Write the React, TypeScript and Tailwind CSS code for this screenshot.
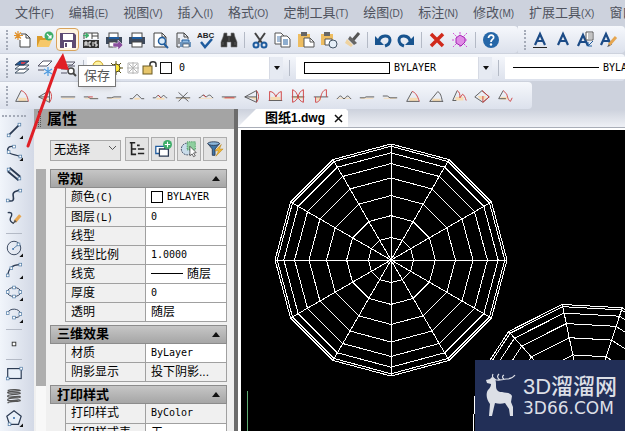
import type { ReactNode } from "react";
import clsx from "clsx";

const NAVY = "#2b3a52";
const BLUE = "#1f5c9e";

const menus = [
	["文件", "(F)"],
	["编辑", "(E)"],
	["视图", "(V)"],
	["插入", "(I)"],
	["格式", "(O)"],
	["定制工具", "(T)"],
	["绘图", "(D)"],
	["标注", "(N)"],
	["修改", "(M)"],
	["扩展工具", "(X)"],
	["窗口", ""],
];

type Tool = { label: string; art: ReactNode } | "sep";

const standardTools: Tool[] = [
	{
		label: "新建",
		art: (
			<>
				<path d="M9 4h5l4 4v9H8v-7" fill="#fff" stroke="#444" />
				<path d="M14 4v4h4" fill="none" stroke="#444" />
				<path d="M6 1v9M2 5.500h9M3 2.500l6 6M9 2.500l-6 6" stroke="#e0912c" strokeWidth="1.200" />
			</>
		),
	},
	{
		label: "打开",
		art: (
			<>
				<path d="M2 6h5l1 2h6v9H2z" fill="#d99a2b" />
				<path d="M2 17l3-7h12l-3 7z" fill="#f6c869" />
				<circle cx="14" cy="6" r="4.500" fill="#3fae6a" />
				<path d="M12 4l4 4M16 5v3h-3" stroke="#fff" fill="none" strokeWidth="1.200" />
			</>
		),
	},
	{
		label: "保存",
		art: (
			<>
				<path d="M2 3h14l2 2v13H2z" fill="#5d4a72" />
				<rect x="5" y="4" width="10" height="6" fill="#fff" />
				<rect x="6" y="12" width="8" height="6" fill="#fff" />
				<rect x="7" y="13" width="2" height="4" fill="#5d4a72" />
			</>
		),
	},
	{
		label: "ACIS",
		art: (
			<>
				<path d="M3 9V3h14v6" fill="#fff" stroke="#444" />
				<path d="M11 3v6M11 6h6" stroke="#444" />
				<path d="M2 5.500h5M5 3l3 2.500L5 8z" fill="#3fae6a" stroke="#3fae6a" />
				<rect x="2" y="10" width="16" height="8" fill="#333" />
				<path d="M4 16v-4h2v4M4 14h2M10 12H8v4h2M12 12v4M16 12h-2v2h2v2h-2" stroke="#fff" fill="none" />
			</>
		),
	},
	{
		label: "输出",
		art: (
			<>
				<rect x="5" y="3" width="9" height="5" fill="#fff" stroke="#444" />
				<path d="M2 7h16v7H2z" fill="#3e4a5c" />
				<rect x="5" y="7" width="10" height="2" fill={BLUE} />
				<rect x="5" y="12" width="7" height="5" fill="#fff" stroke="#444" />
				<path d="M9 13h5v-3l5 5-5 5v-3H9z" fill="#8a4f9e" stroke="#fff" strokeWidth=".5" />
			</>
		),
	},
	{
		label: "打印",
		art: (
			<>
				<rect x="5" y="3" width="10" height="5" fill="#fff" stroke="#444" />
				<path d="M2 7h16v7H2z" fill="#3e4a5c" />
				<rect x="5" y="7" width="10" height="2" fill={BLUE} />
				<rect x="5" y="12" width="10" height="5" fill="#fff" stroke="#444" />
			</>
		),
	},
	{
		label: "打印预览",
		art: (
			<>
				<path d="M4 3h8l4 4v10H4z" fill="#fff" stroke="#444" />
				<path d="M12 3v4h4" fill="none" stroke="#444" />
				<circle cx="12" cy="11" r="3.500" fill="#dcebf8" stroke={BLUE} strokeWidth="1.500" />
				<path d="M14 14l4 4" stroke={BLUE} strokeWidth="2" />
			</>
		),
	},
	{
		label: "页面设置",
		art: (
			<>
				<path d="M4 17V3h7l4 4v2M4 17h3" fill="none" stroke="#444" />
				<path d="M11 3v4h4M6 8v6" fill="none" stroke="#444" />
				<path d="M9 10h7v3H9z" fill="#8db8e0" stroke={BLUE} />
				<path d="M7 12h11v5H7z" fill="#6c94bd" />
				<rect x="10" y="14" width="6" height="3" fill="#fff" stroke="#456" strokeWidth=".7" />
			</>
		),
	},
	{
		label: "拼写检查",
		art: (
			<>
				<text x="1" y="8" fontSize="8" fontWeight="700" fontFamily="Liberation Sans, sans-serif" fill="#222">
					ABC
				</text>
				<path d="M5 12l4 5 7-8" fill="none" stroke={BLUE} strokeWidth="2.500" />
			</>
		),
	},
	{
		label: "查找",
		art: (
			<path
				d="M5 3h3v3h4V3h3l1 4 2 5v5h-6v-5H8v5H2v-5l2-5zM4 12v3M16 12v3M10 7v4"
				fill="#333"
				stroke="#777"
				strokeWidth=".6"
			/>
		),
	},
	"sep",
	{
		label: "剪切",
		art: (
			<>
				<path d="M5 3l7 10M15 3L8 13" stroke="#444" strokeWidth="2" />
				<circle cx="6" cy="15" r="2.500" fill="none" stroke={BLUE} strokeWidth="2" />
				<circle cx="14" cy="15" r="2.500" fill="none" stroke={BLUE} strokeWidth="2" />
			</>
		),
	},
	{
		label: "复制",
		art: (
			<>
				<path d="M2 3h6l3 3v8H2z" fill="#fff" stroke="#555" />
				<path d="M4 7h4M4 9h4M4 11h4" stroke={BLUE} strokeWidth=".8" />
				<path d="M8 6h6l3 3v8H8z" fill="#fff" stroke="#555" />
				<path d="M10 10h5M10 12h5M10 14h5" stroke={BLUE} />
			</>
		),
	},
	{
		label: "粘贴",
		art: (
			<>
				<path d="M2 4h12v13H2z" fill="#eebd60" />
				<path d="M5 2h6v4H5z" fill="#666" />
				<path d="M8 8h6l4 4v5H8z" fill="#fff" stroke="#555" />
				<path d="M14 8v4h4" fill="none" stroke="#555" />
			</>
		),
	},
	{
		label: "选择性粘贴",
		art: (
			<>
				<path d="M2 4h12v11H2z" fill="#eebd60" />
				<path d="M5 2h6v4H5z" fill="#666" />
				<path d="M6 9h7v6H6z" fill="#fff" stroke="#555" />
				<circle cx="14" cy="14" r="4" fill="#e5eef8" stroke="#456" />
			</>
		),
	},
	{
		label: "格式刷",
		art: (
			<>
				<path d="M17 3l-6 7" stroke="#555" strokeWidth="3" />
				<path d="M8 6l7 7-3 2-6-6z" fill="#666" />
				<path d="M5 9l6 6-2 2-6-4z" fill="#efd3a0" />
			</>
		),
	},
	"sep",
	{
		label: "放弃",
		art: (
			<>
				<path d="M6 11c1-6 11-7 11-1 0 3-2 5-5 6" fill="none" stroke="#18548f" strokeWidth="3" />
				<path d="M2 6v9h9z" fill="#18548f" />
			</>
		),
	},
	{
		label: "重做",
		art: (
			<>
				<path d="M14 11C13 5 3 4 3 10c0 3 2 5 5 6" fill="none" stroke="#18548f" strokeWidth="3" />
				<path d="M18 6v9H9z" fill="#18548f" />
			</>
		),
	},
	"sep",
	{ label: "删除", art: <path d="M4 4l12 12M16 4L4 16" stroke="#d02a1c" strokeWidth="3.500" /> },
	{
		label: "清理",
		art: (
			<>
				<path d="M3 3l14 14M17 3L3 17M10 2v3M10 15v3M2 10h3M15 10h3" stroke="#d44fd8" strokeDasharray="2 1" />
				<path d="M10 5l5 3v4l-4 4-5-3V8z" fill="#e08be6" stroke="#a424b4" />
			</>
		),
	},
	"sep",
	{
		label: "帮助",
		art: (
			<>
				<circle cx="10" cy="10" r="8" fill="#2667a8" />
				<path d="M7.500 8c0-4 6-3.500 5 0-.5 1.500-2.500 1.500-2.500 4" fill="none" stroke="#fff" strokeWidth="1.800" />
				<circle cx="10" cy="14.500" r="1.200" fill="#fff" />
			</>
		),
	},
];

const letterA = <path d="M5 15l5-11 5 11M7 11h6" fill="none" stroke="#1c4b86" strokeWidth="2.200" />;

const textTools: Tool[] = [
	{
		label: "单行文字",
		art: (
			<>
				{letterA}
				<path d="M3 17.500h14" stroke="#222" />
			</>
		),
	},
	{ label: "多行文字", art: letterA },
	{
		label: "编辑文字",
		art: (
			<>
				<g transform="translate(-3 1)">{letterA}</g>
				<path d="M10 2h7v8h-7z" fill="#fff" stroke="#555" />
				<path d="M12 4h4M12 6h4M12 8h4" stroke="#555" strokeWidth=".7" />
				<path d="M17 11l-5 5M12 12v4h4" fill="none" stroke={BLUE} />
			</>
		),
	},
	{
		label: "文字样式",
		art: (
			<>
				<g transform="translate(-3 0)">{letterA}</g>
				<path d="M17 7l-7 8" stroke="#e6a650" strokeWidth="3" />
				<path d="M10 14l-2 3 3-1z" fill="#555" />
			</>
		),
	},
];

const layerTools: Tool[] = [
	{
		label: "图层",
		art: (
			<>
				<path d="M3 15h9l5-4H8z" fill="#fff" stroke="#456" />
				<path d="M3 11h9l5-4H8z" fill="#fff" stroke="#456" />
				<path d="M3 7h9l5-4H8z" fill={BLUE} stroke={NAVY} />
				<path d="M9 4h5l-2 2H9z" fill="#c94050" />
			</>
		),
	},
	{
		label: "图层状态",
		art: (
			<>
				<path d="M3 8h9l5-5H8z" fill="#fff" stroke="#556" />
				<path d="M3 12h6" stroke="#556" />
				<path d="M13 9v9M9 11l8 5M17 11l-8 5" stroke="#4d9be0" strokeWidth="1.200" />
			</>
		),
	},
	{
		label: "图层浏览",
		art: (
			<>
				<path d="M5 4h12l-3 3H3M3 11h6l2-3h6M3 15h6" fill="none" stroke="#556" />
				<circle cx="13" cy="13" r="3" fill="#fff" stroke="#444" strokeWidth="1.500" />
				<path d="M15 15l3 3" stroke="#444" strokeWidth="2" />
			</>
		),
	},
];

// dark construction lines with the red result curve on top
function sketch(dark: string, red: string, fill = ""): ReactNode {
	return (
		<>
			<path d={fill} fill="#f6dcb4" />
			<path d={dark} fill="none" stroke="#555" />
			<path d={red} fill="none" stroke="#cf3b3b" />
		</>
	);
}

const BASE = "M3 12h14v1H3z";

const surfaceTools: Tool[] = [
	{ label: "曲面 1", art: sketch("M3 16L9 4M3 16h14", "M9 4c4 1 7 5 8 12", "M6 12h9v4H6z") },
	{ label: "曲面 2", art: sketch("M3 11l12-7v13zM3 11h12", "M15 4c3 4 3 9 0 13", "M6 11l9 3v3z") },
	{ label: "曲面 3", art: sketch("M2 11h16", "", BASE) },
	{ label: "曲面 4", art: sketch("M2 11h5l2 2h9", "M7 11h5", BASE) },
	{ label: "曲面 5", art: sketch("M2 12h5l3-1h8", "", BASE) },
	{ label: "曲面 6", art: sketch("M2 13h3l5-5 5 5h3", "", "M7 12h6v2H7z") },
	{ label: "曲面 7", art: sketch("M2 12h3l3-3 3 3 3-3 3 3h1", "M8 9l3 3", "M6 12h9v2H6z") },
	{ label: "曲面 8", art: sketch("M2 12h16M5 6l11 10M15 6L5 16", "", BASE) },
	{ label: "曲面 9", art: sketch("M2 12c3 0 3-3 5-3s2 2 3 2 2-2 4-2 2 3 4 3", "M7 9l3 2", BASE) },
	{ label: "曲面 10", art: sketch("M2 11h16", "M5 12h11", BASE) },
	{ label: "曲面 11", art: sketch("M2 11l13-7v13zM2 11h13", "M15 4c3 4 3 9 0 13", "M6 11h9v4z") },
	{ label: "曲面 12", art: sketch("M3 15h15", "M4 15V5c4 0 6 3 7 6 1-3 3-5 6-6v10", "M5 11h11v4H5z") },
	{ label: "曲面 13", art: sketch("M3 11h14", "M4 3c3 1 5 4 6 8 1-4 3-7 6-8v14c-3-1-5-3-6-6-1 3-3 5-6 6z", "M5 10h10v3H5z") },
	{ label: "曲面 14", art: sketch("M2 11h16", "M4 11v6c4 0 5-3 6-7s3-7 6-7v8", "M5 11h5v4H5z") },
	{ label: "曲面 15", art: sketch("M2 13c2 0 2-3 4-3s2 3 4 3 2-3 4-3 2 3 4 3", "", BASE) },
	{ label: "曲面 16", art: sketch("M2 12h5l2-1h9", "", BASE) },
	{ label: "曲面 17", art: sketch("M2 10h5l3 2h8", "", BASE) },
	{ label: "曲面 18", art: sketch("M3 16L9 5M3 16h14", "M9 5c4 1 6 5 8 11", "M6 12h9v4H6z") },
	{ label: "曲面 19", art: sketch("M3 16l9-11M3 16h15M12 5c3 2 4 5 5 11", "", "M6 13h9v3H6z") },
	{ label: "曲面 20", art: sketch("M3 15L8 4M3 15h4", "M8 4c3 2 3 4 3 8l3-4c2 1 3 4 4 7", "M6 11h9v4H6z") },
	{ label: "曲面 21", art: sketch("M2 11l8-7 8 7-7 6z", "M10 4l8 7-7 6v-7", "M5 10h9v4H8z") },
	{ label: "曲面 22", art: sketch("M3 13L8 4M3 13h8", "M8 4l4 4c1 5 3 8 4 8l2-4", "M5 11h8v3H5z") },
];

const nodes = (points: number[][]) =>
	points.map(([x, y]) => (
		<rect key={`${x}-${y}`} x={x - 1.5} y={y - 1.5} width="3" height="3" fill="#fff" stroke="#4f7ba5" strokeWidth=".8" />
	));
const flyout = <path d="M20 16v4h-4z" fill="#111" />;

const drawTools: Tool[] = [
	{ label: "直线", art: <><path d="M4 16L16 4" stroke={NAVY} strokeWidth="2" />{nodes([[4, 16], [16, 4]])}{flyout}</> },
	{ label: "多段线", art: <><path d="M9 4C3 3 1 8 5 11c3 2 8 2 12 4" fill="none" stroke={NAVY} strokeWidth="1.400" />{nodes([[10, 4], [4, 10], [17, 15]])}{flyout}</> },
	{ label: "双线", art: <><path d="M3 7l12 10M5 3l12 10" stroke={NAVY} strokeWidth="2" />{nodes([[4, 5], [16, 15]])}</> },
	{ label: "样条", art: <><path d="M3 15c7 2 7-1 6-6s6-4 7-6" fill="none" stroke={NAVY} strokeWidth="1.800" />{nodes([[3, 15], [17, 4]])}</> },
	{ label: "徒手画", art: <><path d="M3 4c6-1 5 3 3 6-1 3 1 5 4 6" fill="none" stroke={NAVY} strokeWidth="1.500" /><path d="M17 7l-6 7" stroke="#e6a650" strokeWidth="3.500" /><path d="M11 12l-3 5 5-3z" fill="#555" /></> },
	"sep",
	{ label: "圆", art: <><circle cx="10" cy="10" r="7.500" fill="none" stroke={NAVY} /><path d="M10 10l5-4" stroke="#4f7ba5" />{nodes([[15, 6]])}<circle cx="9" cy="11" r="1" fill={BLUE} />{flyout}</> },
	{ label: "圆弧", art: <><path d="M3 16C4 8 9 4 16 4" fill="none" stroke={NAVY} strokeWidth="1.200" />{nodes([[3, 16], [7, 8], [17, 4]])}{flyout}</> },
	{ label: "椭圆", art: <><ellipse cx="10" cy="10" rx="7.500" ry="5" fill="none" stroke={NAVY} />{nodes([[3, 10], [10, 5], [17, 10], [10, 15]])}{flyout}</> },
	{ label: "椭圆弧", art: <><path d="M3 9c1-6 14-6 14 1 0 3-3 4-6 4" fill="none" stroke={NAVY} />{nodes([[3, 9], [17, 10], [10, 14]])}{flyout}</> },
	"sep",
	{ label: "点", art: <rect x="8" y="8" width="4" height="4" fill="#fff" stroke="#333" /> },
	"sep",
	{ label: "矩形", art: <><rect x="3" y="4" width="15" height="11" fill="#e8eff8" stroke={NAVY} strokeWidth="1.300" />{nodes([[3, 15], [18, 4]])}</> },
	{ label: "螺旋", art: <path d="M3 4c4-2 14-1 14 0S4 4 3 6s14-1 14 1-13 0-14 3 14-1 14 1-13 0-14 3 14-1 14 1-13 0-14 3" fill="none" stroke="#555" strokeWidth="1.400" /> },
	{ label: "多边形", art: <><path d="M10 2l8 6-3 9H5L2 8z" fill="#e8eff8" stroke={NAVY} strokeWidth="1.300" />{nodes([[5, 17]])}<circle cx="10" cy="10" r="1" fill={BLUE} />{flyout}</> },
];

function ToolButton({ tool, vertical, small }: { tool: Tool; vertical?: boolean; small?: boolean }) {
	if (tool === "sep") {
		return vertical ? (
			<span className="flex h-2 w-full shrink-0 items-center justify-center">
				<span className="h-px w-4 bg-[#b4bac6]" />
			</span>
		) : (
			<span className="flex h-full w-2 shrink-0 items-center justify-center">
				<span className="h-4 w-px bg-[#b4bac6]" />
			</span>
		);
	}
	const active = tool.label === "保存";
	return (
		<button
			aria-label={tool.label}
			className={clsx(
				"flex w-[23px] shrink-0 items-center justify-center",
				vertical ? "h-[22px]" : "h-[23px]",
				active && "rounded-sm border border-[#d8a35c] bg-[#fdf3e1]",
			)}
		>
			<svg viewBox="0 0 20 20" className={clsx("shrink-0", vertical || small ? "size-[18px]" : "size-5")}>
				{tool.art}
			</svg>
		</button>
	);
}

function Toolbar({ tools, small, children }: { tools: Tool[]; small?: boolean; children?: ReactNode }) {
	return (
		<div className="flex h-[27px] shrink-0 items-center rounded-r bg-linear-to-b from-[#f6f8fc] to-[#dce1ec] pl-1.5">
			<span className="mr-0.5 h-5 w-0.5 shrink-0 border-l-2 border-dotted border-[#a5abb8]" />
			{tools.map((tool, i) => (
				<ToolButton key={i} tool={tool} small={small} />
			))}
			{children}
		</div>
	);
}

function Combo({ label, flush, children }: { label: string; flush?: boolean; children: ReactNode }) {
	return (
		<button
			aria-label={label}
			className={clsx("flex h-[22px] w-[196px] shrink-0 items-center bg-white text-left", flush ? "pl-0.5" : "pl-2")}
		>
			<span className="flex flex-1 items-center">{children}</span>
			<span className="flex h-full w-3.5 items-center justify-center border-l border-[#d6dae4] bg-[#e6eaf2]">
				<svg viewBox="0 0 6 4" className="h-1 w-1.5">
					<path d="M0 0h6L3 4z" fill="#111" />
				</svg>
			</span>
		</button>
	);
}

function LayerIcons() {
	return (
		<svg viewBox="0 0 84 18" className="mr-1.5 h-[18px] w-[84px]">
			<circle cx="9" cy="7" r="5" fill="#fff3a0" stroke="#c9a020" />
			<path d="M7 12h4v3H7z" fill="#777" />
			<path d="M27 2v14M20 9h14M22 4l10 10M32 4L22 14" stroke="#554c10" />
			<circle cx="27" cy="9" r="4" fill="#ffe93b" stroke="#554c10" />
			<path d="M44 3v12M38 9h12M40 5l8 8M48 5l-8 8M39 4h10v10H39z" stroke="#b5b5b5" fill="none" />
			<path d="M61 8V5c0-3 6-3 6 0v3" fill="none" stroke="#333" strokeWidth="1.500" />
			<rect x="54" y="7" width="9" height="8" fill="#e7c66c" stroke="#6b5a22" />
			<rect x="71.500" y="3.500" width="11" height="11" fill="#fff" stroke="#111" />
		</svg>
	);
}

const sections = [
	{
		title: "常规",
		rows: [
			{ name: "颜色", key: "(C)", value: "BYLAYER", mark: "swatch" },
			{ name: "图层", key: "(L)", value: "0" },
			{ name: "线型", value: "" },
			{ name: "线型比例", value: "1.0000" },
			{ name: "线宽", value: "随层", cjk: true, mark: "line" },
			{ name: "厚度", value: "0" },
			{ name: "透明", value: "随层", cjk: true },
		],
	},
	{
		title: "三维效果",
		rows: [
			{ name: "材质", value: "ByLayer" },
			{ name: "阴影显示", value: "投下阴影...", cjk: true, locked: true },
		],
	},
	{
		title: "打印样式",
		rows: [
			{ name: "打印样式", value: "ByColor", locked: true },
			{ name: "打印样式表", value: "无", cjk: true },
		],
	},
];

const mono = "font-['DejaVu_Sans_Mono',monospace] text-[10px] leading-3";

const panelTools = [
	{
		label: "树形",
		art: <path d="M2 3h6M4 3v13h5M4 10h5M10 6h3M11 10h7M11 15h7" fill="none" stroke="#222" strokeWidth="1.800" />,
	},
	{
		label: "添加选择",
		art: (
			<>
				<path d="M2 7h10v8H2z" fill="#fff" stroke={BLUE} strokeWidth="1.400" />
				<path d="M6 10h10v8H6z" fill="#fff" stroke={NAVY} strokeWidth="1.400" />
				<circle cx="15" cy="5" r="5" fill="#3fae6a" />
				<path d="M15 2v6M12 5h6" stroke="#fff" strokeWidth="1.200" />
			</>
		),
	},
	{
		label: "选择对象",
		art: (
			<>
				<circle cx="8" cy="10" r="6.500" fill="#c9dcea" stroke={NAVY} strokeDasharray="2 1" />
				<path d="M8 2h9v9H8z" fill="#8fcf9f" stroke="#2e8b4a" strokeDasharray="1 1" />
				<path d="M11 7l7 7-3 .5 2 3-2 1-1.500-3-2.500 2z" fill="#fff" stroke="#333" strokeWidth=".8" />
			</>
		),
	},
	{
		label: "快速选择",
		art: (
			<>
				<path d="M2 4h13l-5 6v7H7v-7z" fill="#3d75a8" stroke={NAVY} />
				<ellipse cx="8.500" cy="4" rx="6.500" ry="2" fill="#8bb6da" stroke={NAVY} />
				<path d="M17 5l-7 7h4l-3 6 8-8h-4z" fill="#f2b632" stroke="#a97812" strokeWidth=".5" />
			</>
		),
	},
];

function Properties() {
	return (
		<aside className="flex w-[200px] shrink-0 flex-col overflow-hidden bg-[#f0f0f0]">
			<header className="flex h-5 shrink-0 items-center bg-[#a4a4a4] pl-1">
				<span className="mr-1.5 h-4 w-[3px] border-x border-dotted border-[#555]" />
				<h2 className="text-[15px] leading-5 font-bold text-black">属性</h2>
			</header>
			<div className="flex shrink-0 items-center gap-0.5 px-4 py-2">
				<div className="relative mr-0.5">
					<select
						aria-label="选择"
						className="h-[21px] w-[71px] appearance-none border border-[#a8a8a8] bg-[#e6e6e6] pl-[3px] text-xs leading-4"
					>
						<option>无选择</option>
					</select>
					<svg viewBox="0 0 9 6" className="pointer-events-none absolute top-2 right-1 h-1.5 w-[9px]">
						<path d="M1 1l3.500 3.500L8 1" fill="none" stroke="#555" />
					</svg>
				</div>
				{panelTools.map((tool) => (
					<button
						key={tool.label}
						aria-label={tool.label}
						className="flex size-6 shrink-0 items-center justify-center border border-[#adadad] bg-[#e3e3e3]"
					>
						<svg viewBox="0 0 20 20" className="size-[18px] shrink-0">
							{tool.art}
						</svg>
					</button>
				))}
			</div>
			<div className="flex min-h-0 flex-1">
				<div className="mr-1 ml-0.5 flex w-2.5 shrink-0 flex-col bg-[#f8f8f8]">
					<div className="h-[217px] bg-[#aeaeae]" />
				</div>
				<div className="flex w-[177px] shrink-0 flex-col gap-[3px]">
					{sections.map((section) => (
						<section key={section.title}>
							<h3>
								<button className="flex h-[19px] w-full items-center justify-between border border-[#8c8c8c] bg-linear-to-b from-[#c6c6c6] to-[#a6a6a6] px-1.5 text-[13px] leading-4 font-bold text-black">
									{section.title}
									<svg viewBox="0 0 8 5" className="h-[5px] w-2">
										<path d="M0 5h8L4 0z" fill="#111" />
									</svg>
								</button>
							</h3>
							<div className="pl-[15px]">
								<table className="w-full table-fixed border-collapse text-xs leading-4 text-black">
									<tbody>
										{section.rows.map((row) => (
											<tr key={row.name} className="h-[19px]">
												<th
													scope="row"
													className="w-20 overflow-hidden border border-t-0 border-[#a0a0a0] p-0 pl-[5px] text-left font-normal whitespace-nowrap"
												>
													{row.name}
													{row.key && <span className={mono}>{row.key}</span>}
												</th>
												<td
													className={clsx(
														"border border-t-0 border-[#a0a0a0] p-0 pl-[5px] whitespace-nowrap",
														row.locked ? "bg-[#f0f0f0]" : "bg-white",
													)}
												>
													<span className="flex h-4 items-center">
														{row.mark === "swatch" && <span className="mr-1 size-3 border border-black" />}
														{row.mark === "line" && <span className="mr-1 h-px w-8 bg-black" />}
														<span className={row.cjk ? undefined : mono}>{row.value}</span>
													</span>
												</td>
											</tr>
										))}
									</tbody>
								</table>
							</div>
						</section>
					))}
				</div>
			</div>
		</aside>
	);
}

const RADIUS = 116;

// top view of a 12-sided sphere mesh
function Sphere({ cx, cy, turn }: { cx: number; cy: number; turn: number }) {
	const at = (r: number, i: number) => {
		const a = ((turn + i * 30) * Math.PI) / 180;
		return [cx + r * Math.cos(a), cy + r * Math.sin(a)];
	};
	const spokes = Array.from({ length: 12 }, (_, i) => i);
	const rings = [1, 2, 3, 4, 5, 6, 7, 8].map((k) => RADIUS * Math.sin((k * 11.25 * Math.PI) / 180));
	return (
		<g fill="none" stroke="#fff" shapeRendering="crispEdges">
			{rings.map((r) => (
				<polygon key={r} points={spokes.map((i) => at(r, i).join(",")).join(" ")} />
			))}
			{spokes.map((i) => {
				const [x, y] = at(RADIUS, i);
				return <line key={i} x1={cx} y1={cy} x2={x} y2={y} />;
			})}
		</g>
	);
}

function Watermark() {
	return (
		<div className="absolute right-0 bottom-0 flex h-[71px] w-[150px] items-center bg-[#222f57] pl-2 text-[#dcdfe6]">
			<svg viewBox="0 0 34 46" className="mr-1.5 h-[46px] w-[34px] shrink-0">
				<path
					d="M3 7l4-1 2-2 3 2c1 2 1 4 1 7 0 4 2 6 6 6 4 1 8 0 10 4l-1 6 2 5v9h-3l-1-7-4-6c-3 1-7 1-10 0l-1 4-2 9H6l1-12C4 27 3 23 4 19c1-3 4-4 4-8L4 10z"
					fill="#dcdfe6"
				/>
				<path
					d="M10 6c4 2 9 1 13 0 4 0 7-1 9-4M13 7c-4-2-4-4-3-6M17 7c-3-2-3-4-1-6M21 6c-2-1-2-3 0-4"
					fill="none"
					stroke="#dcdfe6"
					strokeWidth="1.200"
				/>
			</svg>
			<div className="flex flex-col">
				<span className="text-[22px] leading-6 font-medium whitespace-nowrap">3D溜溜网</span>
				<span className="font-['DejaVu_Sans',sans-serif] text-[17px] leading-[18px]">3D66.COM</span>
			</div>
		</div>
	);
}

function Drawing() {
	return (
		<main className="flex min-w-0 flex-1 flex-col">
			<div className="flex h-[19px] shrink-0 items-end border-b border-[#a9aeb8] bg-linear-to-b from-[#ccd1dc] to-[#eff1f6]">
				<div className="flex h-[18px] w-[110px] items-center bg-white pl-[27px] text-black [clip-path:polygon(0_100%,18px_0,108px_0,110px_2px,110px_100%)]">
					<span className="text-[13px] leading-4 font-bold whitespace-nowrap">
						图纸<span className="font-['Liberation_Sans',sans-serif] text-xs">1.dwg</span>
					</span>
					<button aria-label="关闭" className="ml-auto pr-[5px]">
						<svg viewBox="0 0 9 9" className="size-[9px]">
							<path d="M1 1l7 7M8 1L1 8" stroke="#111" strokeWidth="1.500" />
						</svg>
					</button>
				</div>
			</div>
			<div className="relative min-h-0 flex-1 overflow-hidden border-t-2 border-l-3 border-white bg-black">
				<svg className="size-full">
					<Sphere cx={150} cy={130} turn={0} />
					<Sphere cx={345} cy={288} turn={18.2} />
					<path d="M6.500 261v60" stroke="#5fae74" />
				</svg>
				<Watermark />
			</div>
		</main>
	);
}

export default function App() {
	return (
		<div className="relative flex h-screen flex-col overflow-hidden bg-[#cdd2dd] font-['Liberation_Sans','Noto_Sans_CJK_SC',sans-serif]">
			<nav className="flex h-[26px] shrink-0 items-center gap-[15px] overflow-hidden pl-[15px] text-[#4f535e]">
				{menus.map(([name, key]) => (
					<button key={name} className="shrink-0 text-[13px] leading-5 whitespace-nowrap">
						{name}
						<span className="text-[10px]">{key}</span>
					</button>
				))}
			</nav>

			<div className="flex shrink-0 flex-col gap-px overflow-hidden">
				<div className="flex">
					<Toolbar tools={standardTools}>
						<span className="w-4" />
					</Toolbar>
					<div className="flex-1">
						<Toolbar tools={textTools} />
					</div>
				</div>
				<Toolbar tools={layerTools}>
					<ToolButton tool="sep" />
					<Combo label="图层" flush>
						<LayerIcons />
						<span className={mono}>0</span>
					</Combo>
					<span className="mx-1.5 h-4 w-px shrink-0 bg-[#b4bac6]" />
					<Combo label="颜色">
						<span className="mr-1 h-3 w-[86px] border border-black" />
						<span className={mono}>BYLAYER</span>
					</Combo>
					<span className="mx-1.5 h-4 w-px shrink-0 bg-[#b4bac6]" />
					<Combo label="线型">
						<span className="mr-1 h-px w-[86px] bg-black" />
						<span className={mono}>BYLAYER</span>
					</Combo>
				</Toolbar>
				<div className="flex">
					<Toolbar tools={surfaceTools} small>
						<span className="w-4" />
					</Toolbar>
				</div>
			</div>

			<div className="flex min-h-0 flex-1">
				<div className="flex w-[34px] shrink-0 flex-col bg-linear-to-r from-[#f1f5fb] to-[#d3d9e6] pt-1.5 pr-1.5">
					<span className="mb-0.5 ml-0.5 w-6 border-t-2 border-dotted border-[#a5abb8]" />
					<div className="flex flex-col items-center">
						{drawTools.map((tool, i) => (
							<ToolButton key={i} tool={tool} vertical />
						))}
					</div>
				</div>
				<Properties />
				<div className="w-1 shrink-0 bg-[#6c6c6c]" />
				<Drawing />
			</div>

			<div role="tooltip" className="absolute top-[65px] left-[78px] border border-[#767676] bg-white px-[5px] text-[13px] leading-5 text-[#575757] shadow-md">
				保存
			</div>
			<svg viewBox="0 0 50 100" className="pointer-events-none absolute top-[50px] left-5 h-[100px] w-[50px]">
				<path d="M8 96l28-78" stroke="#e01f26" strokeWidth="3" strokeLinecap="round" />
				<path d="M43 3l6 17-15-2z" fill="#e01f26" />
			</svg>
		</div>
	);
}
